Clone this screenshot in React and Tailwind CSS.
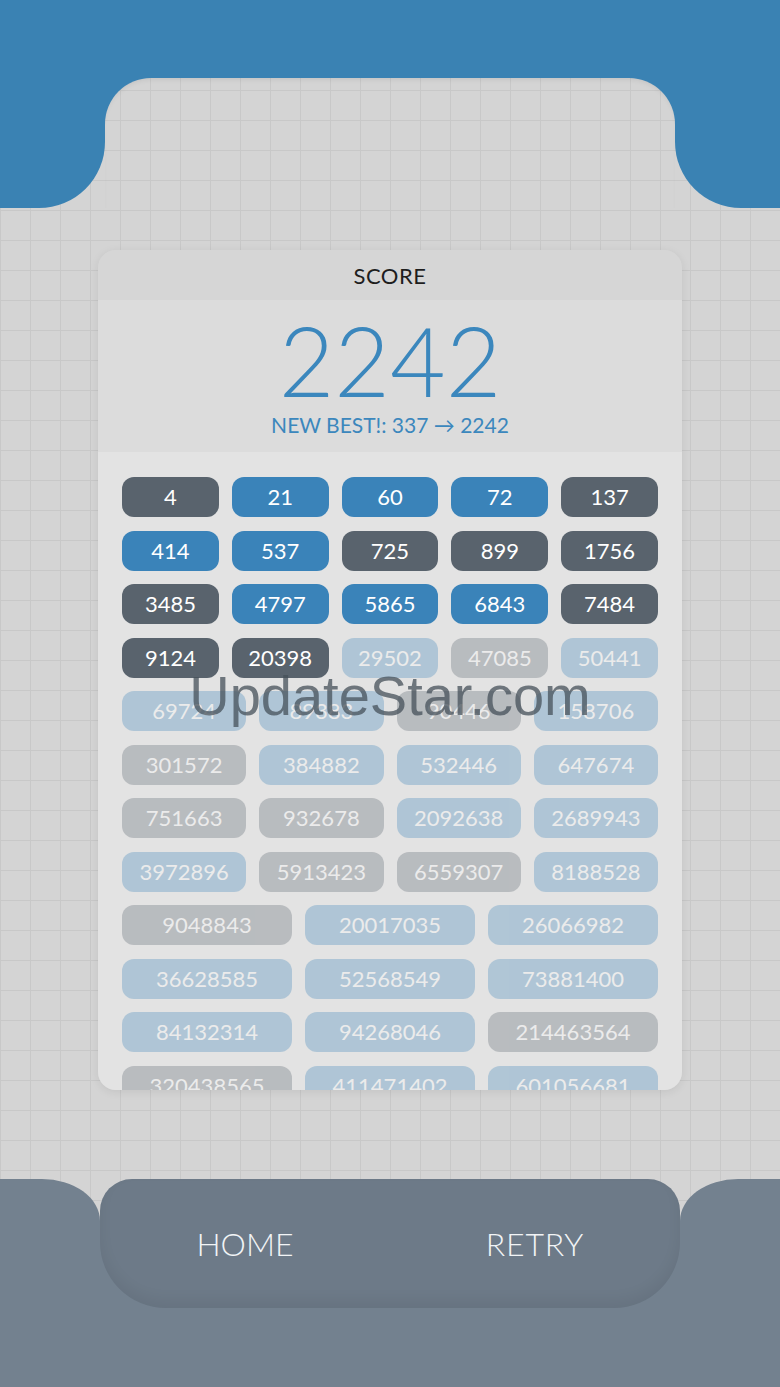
import React from "react";

// grid paper behind everything (fixed so separate panels line up)
const GRID =
  "bg-[#d4d4d4] bg-[linear-gradient(to_right,#c8c8c8_1px,transparent_1px),linear-gradient(to_bottom,#c8c8c8_1px,transparent_1px)] bg-size-[30px_30px] bg-fixed";

const ROWS = [
  { cols: 5, items: [["4", "d"], ["21", "b"], ["60", "b"], ["72", "b"], ["137", "d"]] },
  { cols: 5, items: [["414", "b"], ["537", "b"], ["725", "d"], ["899", "d"], ["1756", "d"]] },
  { cols: 5, items: [["3485", "d"], ["4797", "b"], ["5865", "b"], ["6843", "b"], ["7484", "d"]] },
  { cols: 5, items: [["9124", "d"], ["20398", "d"], ["29502", "b", 1], ["47085", "d", 1], ["50441", "b", 1]] },
  { cols: 4, items: [["69724", "b", 1], ["89383", "b", 1], ["90446", "d", 1], ["158706", "b", 1]] },
  { cols: 4, items: [["301572", "d", 1], ["384882", "b", 1], ["532446", "b", 1], ["647674", "b", 1]] },
  { cols: 4, items: [["751663", "d", 1], ["932678", "d", 1], ["2092638", "b", 1], ["2689943", "b", 1]] },
  { cols: 4, items: [["3972896", "b", 1], ["5913423", "d", 1], ["6559307", "d", 1], ["8188528", "b", 1]] },
  { cols: 3, items: [["9048843", "d", 1], ["20017035", "b", 1], ["26066982", "b", 1]] },
  { cols: 3, items: [["36628585", "b", 1], ["52568549", "b", 1], ["73881400", "b", 1]] },
  { cols: 3, items: [["84132314", "b", 1], ["94268046", "b", 1], ["214463564", "d", 1]] },
  { cols: 3, items: [["320438565", "d", 1], ["411471402", "b", 1], ["601056681", "b", 1]] },
];

const COLS = {
  3: "grid-cols-3",
  4: "grid-cols-4",
  5: "grid-cols-5",
};

const Chip = ({ value, tone, faded }) => (
  <div
    className={`h-[40px] rounded-[12px] flex items-center justify-center text-[22px] text-white leading-none ${
      tone === "b" ? "bg-[#3a83b9]" : "bg-[#59636d]"
    } ${faded ? "opacity-30" : ""}`}
  >
    {value}
  </div>
);

const App = () => {
  return (
    <div
      className={`relative w-[780px] h-[1387px] overflow-hidden flex flex-col font-['Lato',sans-serif] ${GRID}`}
    >
      {/* top bar with the tab cut into it */}
      <div className="h-[78px] shrink-0 bg-[#3a82b3]" />
      <div className="flex h-[130px] shrink-0">
        <div className="w-[105px] bg-[#3a82b3] rounded-br-[66px]" />
        <div className="flex-1 bg-[linear-gradient(to_bottom,#3a82b3_60px,transparent_60px)]">
          <div className={`h-full rounded-t-[46px] shadow-[inset_0_4px_6px_-4px_rgba(0,0,0,0.12)] ${GRID}`} />
        </div>
        <div className="w-[105px] bg-[#3a82b3] rounded-bl-[66px]" />
      </div>

      {/* result card */}
      <div className="mt-[42px] mx-auto w-[584px] h-[840px] shrink-0 rounded-[18px] overflow-hidden flex flex-col shadow-[0_2px_10px_rgba(0,0,0,0.08)]">
        <div className="h-[50px] shrink-0 bg-[#d6d6d6] flex items-center justify-center text-[22px] text-[#1e1e1e] tracking-wide">
          SCORE
        </div>
        <div className="h-[152px] shrink-0 bg-[#dcdcdc] flex flex-col items-center pt-[12px]">
          <div className="text-[96px] font-light leading-none text-[#3b87bd]">2242</div>
          <div className="mt-[6px] text-[21px] leading-none text-[#3b87bd]">
            NEW BEST!: 337 → 2242
          </div>
        </div>
        <div className="flex-1 min-h-0 bg-[#e3e3e3] px-[24px] pt-[25px] flex flex-col gap-y-[13.5px]">
          {ROWS.map((row, i) => (
            <div key={i} className={`grid shrink-0 ${COLS[row.cols]} gap-x-[13px]`}>
              {row.items.map(([value, tone, faded]) => (
                <Chip key={value} value={value} tone={tone} faded={faded} />
              ))}
            </div>
          ))}
        </div>
      </div>

      {/* bottom bar with buttons */}
      <div className="mt-auto flex h-[129px] shrink-0">
        <div className="w-[100px] bg-[#73818f] rounded-tr-[58px_42px]" />
        <div className="flex-1 bg-[linear-gradient(to_bottom,transparent_50px,#73818f_50px)]">
          <div className="h-full flex items-center rounded-t-[32px] rounded-b-[66px] bg-[#6d7a88] shadow-[inset_0_-8px_14px_rgba(0,0,0,0.06)] text-[32px] font-light text-[#f2f4f6] leading-none">
            <span className="flex-1 text-center">HOME</span>
            <span className="flex-1 text-center tracking-wide">RETRY</span>
          </div>
        </div>
        <div className="w-[100px] bg-[#73818f] rounded-tl-[58px_42px]" />
      </div>
      <div className="h-[79px] shrink-0 bg-[#73818f]" />

      <div className="pointer-events-none absolute left-0 right-0 top-[668px] text-center text-[56px] leading-none text-[#46505a]/75 font-['Liberation_Sans',sans-serif]">
        UpdateStar.com
      </div>
    </div>
  );
};

export default App;
